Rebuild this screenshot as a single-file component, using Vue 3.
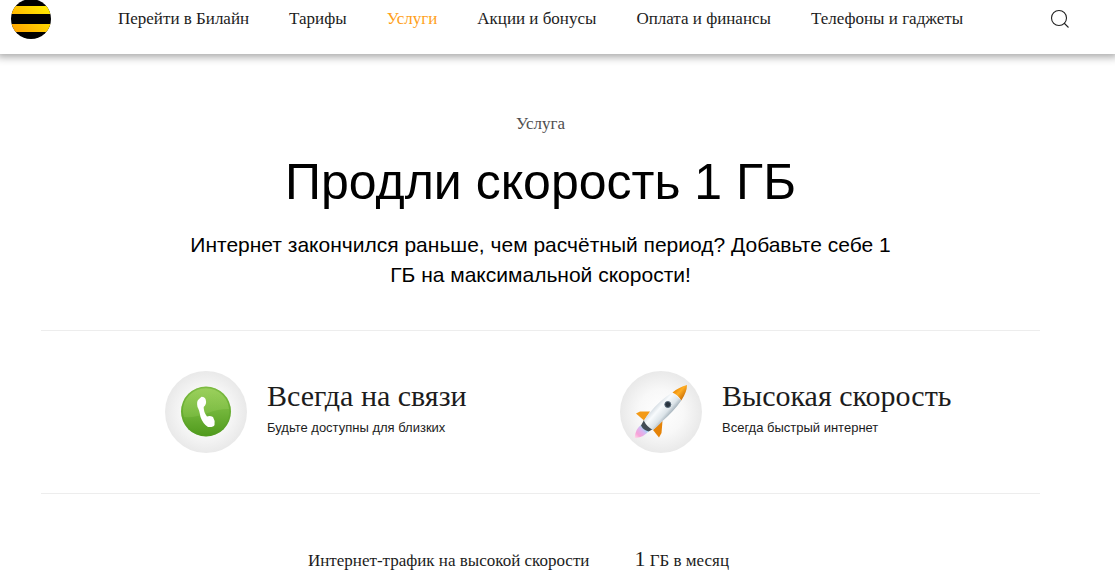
<script setup>
const links = [
  { text: 'Перейти в Билайн' },
  { text: 'Тарифы' },
  { text: 'Услуги', active: true },
  { text: 'Акции и бонусы' },
  { text: 'Оплата и финансы' },
  { text: 'Телефоны и гаджеты' },
]
</script>

<template>
  <div class="page">
    <header class="header">
      <a class="logo" href="#" aria-label="Билайн">
        <svg width="40" height="40" viewBox="0 0 40 40">
          <defs>
            <linearGradient id="bee" x1="0" y1="40" x2="40" y2="0" gradientUnits="userSpaceOnUse">
              <stop offset="0.1" stop-color="#ffa000" />
              <stop offset="0.3" stop-color="#ffb400" />
              <stop offset="0.8" stop-color="#ffe600" />
            </linearGradient>
            <clipPath id="disc"><circle cx="20" cy="20" r="20" /></clipPath>
          </defs>
          <g clip-path="url(#disc)">
            <rect width="40" height="40" fill="#000" />
            <rect y="7" width="40" height="8" fill="url(#bee)" />
            <rect y="25" width="40" height="8" fill="url(#bee)" />
          </g>
        </svg>
      </a>
      <nav class="nav">
        <a v-for="l in links" :key="l.text" href="#" :class="{ active: l.active }">{{ l.text }}</a>
      </nav>
      <button class="search" type="button" aria-label="Поиск">
        <svg width="20" height="20" viewBox="0 0 20 20" fill="none" stroke="#222" stroke-width="1.1">
          <circle cx="9" cy="9" r="7.5" />
          <path d="M14 14l4.500 4.500" />
        </svg>
      </button>
    </header>

    <main class="main">
      <div class="content">
        <section class="intro">
          <p class="kind">Услуга</p>
          <h1>Продли скорость 1 ГБ</h1>
          <p class="lead">Интернет закончился раньше, чем расчётный период? Добавьте себе 1 ГБ на максимальной скорости!</p>
        </section>

        <section class="features">
          <article class="feature">
            <svg class="badge" viewBox="0 0 82 82">
              <defs>
                <radialGradient id="plate">
                  <stop offset="0" stop-color="#fff" />
                  <stop offset="0.55" stop-color="#f8f8f8" />
                  <stop offset="1" stop-color="#e9e9e9" />
                </radialGradient>
                <linearGradient id="green" x1="0" y1="0" x2="0" y2="1">
                  <stop offset="0" stop-color="#8cc84b" />
                  <stop offset="0.5" stop-color="#72b53a" />
                  <stop offset="1" stop-color="#4f9a1c" />
                </linearGradient>
                <linearGradient id="gloss" x1="0" y1="0" x2="0" y2="1">
                  <stop offset="0" stop-color="#b9e07f" stop-opacity="0.35" />
                  <stop offset="1" stop-color="#a9db68" stop-opacity="0.2" />
                </linearGradient>
              </defs>
              <circle cx="41" cy="41" r="41" fill="url(#plate)" />
              <circle cx="41" cy="40.500" r="25" fill="url(#green)" />
              <path d="M18 41A23 23 0 0 1 64 38Q52 38 43 42Q30 47 19 46Z" fill="url(#gloss)" />
              <circle cx="41" cy="40.500" r="24" fill="none" stroke="#559f24" stroke-opacity="0.35" stroke-width="1.500" />
              <path d="M36.500 25.700Q40.500 26 40.800 29Q42 33 38.700 36Q38.500 41 42 45.500Q45 44.500 48 46Q50.500 50 49.500 54Q48.500 56.500 43 56Q38 53 35.500 46Q34 38 32.500 36Q31.500 31 33 29Z" fill="#fff" />
            </svg>
            <div class="text">
              <h2>Всегда на связи</h2>
              <p>Будьте доступны для близких</p>
            </div>
          </article>
          <article class="feature">
            <svg class="badge" viewBox="0 0 82 82">
              <defs>
                <linearGradient id="hull" x1="35" y1="33" x2="51" y2="47" gradientUnits="userSpaceOnUse">
                  <stop offset="0" stop-color="#ccd5dc" />
                  <stop offset="0.3" stop-color="#f8fbfd" />
                  <stop offset="0.65" stop-color="#dce4e9" />
                  <stop offset="1" stop-color="#7e8f9b" />
                </linearGradient>
                <linearGradient id="nose" x1="54" y1="20" x2="63" y2="28" gradientUnits="userSpaceOnUse">
                  <stop offset="0" stop-color="#ec8b07" />
                  <stop offset="0.4" stop-color="#ffae24" />
                  <stop offset="1" stop-color="#c96d05" />
                </linearGradient>
                <linearGradient id="flame" x1="26" y1="56" x2="15" y2="67" gradientUnits="userSpaceOnUse">
                  <stop offset="0" stop-color="#84e9fa" />
                  <stop offset="0.35" stop-color="#d9b6f0" />
                  <stop offset="0.7" stop-color="#f7a2d8" />
                  <stop offset="1" stop-color="#ffdbe9" />
                </linearGradient>
              </defs>
              <circle cx="41" cy="41" r="41" fill="url(#plate)" />
              <path d="M21 54Q15 58 14.700 67.300Q25 66 29.500 59Z" fill="url(#flame)" />
              <path d="M30 40.500L20 40.500L16 42.500L24 49.500Z" fill="#f39a17" />
              <path d="M42.500 50L41.500 62L39 66.500L33 59Z" fill="#e58308" />
              <path d="M24 49L33 58L28.700 60.500Q23 59 21 54.500Z" fill="#424d56" />
              <path d="M52.500 21.500Q40 29 30 41.500Q25 47 24 50Q27 56 33 59Q37 56 42.500 50Q54 40 61.300 29.500Z" fill="url(#hull)" />
              <path d="M52.500 21.500Q59 16 67 14Q67 21 61.300 29.500Q58 24 52.500 21.500Z" fill="url(#nose)" />
              <circle cx="47.800" cy="33.500" r="3" fill="#29343f" stroke="#596b7b" />
            </svg>
            <div class="text">
              <h2>Высокая скорость</h2>
              <p>Всегда быстрый интернет</p>
            </div>
          </article>
        </section>

        <dl class="params">
          <dt>Интернет-трафик на высокой скорости</dt>
          <dd><span class="amount">1</span> ГБ в месяц</dd>
        </dl>
      </div>
    </main>
  </div>
</template>

<style>
body {
  background: #fff;
}
</style>

<style scoped>
.page {
  color: #1c1c1c;
  font-family: "Liberation Serif", "Times New Roman", serif;
  font-size: 17px;
  line-height: 20px;
}
h1, h2, p, dl, dd {
  margin: 0;
  font-weight: 400;
}
.header {
  display: flex;
  align-items: flex-start;
  height: 54px;
  padding: 0 45px 0 11px;
  box-sizing: border-box;
  box-shadow: 0 0 8px 3px rgba(0, 0, 0, 0.35);
  clip-path: inset(0 0 -12px 0);
}
.logo {
  display: block;
  height: 40px;
  margin-top: -1px;
}
.logo svg,
.search svg {
  display: block;
}
.nav {
  display: flex;
  gap: 40px;
  flex: 1;
  margin-left: 67px;
  padding-top: 9px;
  white-space: nowrap;
}
.nav a {
  color: inherit;
  text-decoration: none;
}
.nav .active {
  color: #ff9f1a;
}
.search {
  margin-top: 9px;
  padding: 0;
  border: 0;
  background: none;
}
.main {
  padding: 0 75px 0 41px;
}
.content {
  max-width: 999px;
  margin: 0 auto;
}
.intro {
  padding: 60px 140px 40px;
  border-bottom: 1px solid #ededed;
  text-align: center;
}
.kind {
  color: #505050;
}
h1 {
  margin: 18px 0;
  color: #000;
  font: 50px/60px "Liberation Sans", Arial, sans-serif;
}
.lead {
  color: #000;
  font: 21px/30px "Liberation Sans", Arial, sans-serif;
}
.features {
  display: grid;
  grid-template-columns: 1fr 1fr;
  gap: 35px;
  padding: 40px 0 40px 124px;
  border-bottom: 1px solid #ededed;
}
.feature {
  display: flex;
  gap: 20px;
}
.badge {
  width: 82px;
  height: 82px;
  flex: none;
}
h2 {
  margin-top: 7px;
  font-size: 30px;
  line-height: 36px;
  white-space: nowrap;
}
.feature p {
  margin-top: 6px;
  font: 13px/16px "Liberation Sans", Arial, sans-serif;
}
.params {
  display: flex;
  align-items: baseline;
  justify-content: center;
  gap: 45px;
  padding: 55px 44px 0 0;
}
.amount {
  font-size: 22px;
}
</style>
